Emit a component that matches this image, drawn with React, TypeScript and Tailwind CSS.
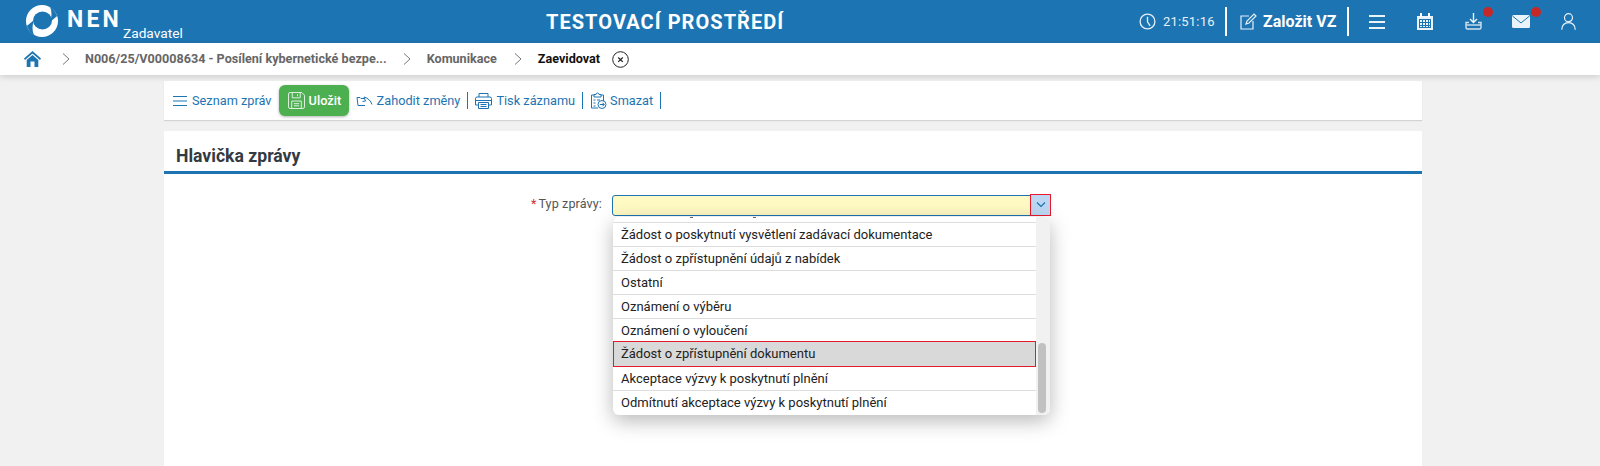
import React from "react";

const Logo = () => (
  <svg width="32" height="32" viewBox="0 0 32 32" fill="none">
    <circle cx="16" cy="16" r="16" fill="#fff" />
    <ellipse cx="16.500" cy="15.500" rx="9.500" ry="9" fill="#1d74b2" />
    <path d="M0.800 21 C2.500 25.500 5 28.500 8 30 C6 26 6 20.500 8 15 Z" fill="#1d74b2" />
    <path d="M31.200 11 C29.500 6.500 27 3.500 24 2 C26 6 26 11.500 24 17 Z" fill="#1d74b2" />
  </svg>
);

const Clock = () => (
  <svg width="17" height="17" viewBox="0 0 17 17" fill="none" stroke="#e6f0f8" strokeWidth="1.300">
    <circle cx="8.500" cy="8.500" r="7.400" /><path d="M8.500 3.800v5l2.600 4" />
  </svg>
);
const Edit = () => (
  <svg width="17" height="17" viewBox="0 0 17 17" fill="none" stroke="#e6f0f8" strokeWidth="1.200">
    <path d="M9 3H1v13h12V8" /><path d="M6 11l1-3 7-7 2 2-7 7z" />
  </svg>
);
const Calendar = () => (
  <svg width="16" height="17" viewBox="0 0 16 17">
    <path d="M0 3h16v14H0z" fill="#eaf3fa" />
    <path d="M3 0h2v4H3zM11 0h2v4h-2z" fill="#fff" />
    <path d="M2 6h12v9H2z" fill="#1d74b2" />
    <path d="M3 7h2v2H3zM6 7h2v2H6zM9 7h2v2H9zM12 7h1v2h-1zM3 10h2v2H3zM6 10h2v2H6zM9 10h2v2H9zM12 10h1v2h-1zM3 13h2v1H3zM6 13h2v1H6zM9 13h2v1H9zM12 13h1v1h-1z" fill="#eaf3fa" />
  </svg>
);
const Download = () => (
  <svg width="17" height="17" viewBox="0 0 17 17" fill="none" stroke="#eaf3fa" strokeWidth="1.400">
    <path d="M8.500 0v9M5 6l3.500 3.500L12 6" />
    <path d="M4 9.500H1v5a1.500 1.500 0 0 0 1.500 1.500h12a1.500 1.500 0 0 0 1.500-1.500v-5h-3" stroke="#cfe2f1" />
    <path d="M1 12h15" stroke="#cfe2f1" />
  </svg>
);
const Mail = () => (
  <svg width="18" height="13" viewBox="0 0 18 13">
    <rect width="18" height="13" rx="1.500" fill="#eaf3fa" />
    <path d="M0.500 1 L9 8 L17.500 1" fill="none" stroke="#1d74b2" strokeWidth="1" />
  </svg>
);
const User = () => (
  <svg width="15" height="17" viewBox="0 0 15 17" fill="none" stroke="#e6f0f8" strokeWidth="1.200">
    <circle cx="7.500" cy="4.700" r="4" /><path d="M.7 16.800C1 12.500 3.500 9.700 7.500 9.700s6.500 2.800 6.800 7.100" />
  </svg>
);
const Home = () => (
  <svg width="17" height="16" viewBox="0 0 17 16" fill="#1d74b2">
    <path d="M8.500 0 L0 7.500 L1 9 L8.500 2.600 L16 9 L17 7.500 Z" />
    <path d="M2.700 9 L8.500 4 L14.300 9 V16 H10.500 V10.500 H6.500 V16 H2.700 Z" />
  </svg>
);
const Chevron = () => (
  <svg width="8" height="12" viewBox="0 0 8 12" fill="none" stroke="#777" strokeWidth="1"><path d="M1 .5 7 6 1 11.500" /></svg>
);
const CloseC = () => (
  <svg width="17" height="17" viewBox="0 0 17 17" fill="none" stroke="#222" strokeWidth="1">
    <circle cx="8.500" cy="8.500" r="7.800" /><path d="M6.200 6.500l4.600 4.400M10.800 6.500l-4.600 4.400" strokeWidth="1.200" />
  </svg>
);
const Lines = () => (
  <svg width="14" height="10" viewBox="0 0 14 10" stroke="#1d74b2" strokeWidth="1"><path d="M0 .5h14M0 5h14M0 9.500h14" /></svg>
);
const Save = () => (
  <svg width="17" height="17" viewBox="0 0 16 16" fill="none" stroke="#e8f5e9" strokeWidth="0.900">
    <path d="M2 .5h11l2.500 2.500v11a1.500 1.500 0 0 1-1.500 1.500H2A1.500 1.500 0 0 1 .5 14V2A1.500 1.500 0 0 1 2 .5Z" />
    <path d="M4 .5v5h7.500v-5M9 2v2M3.500 15.500V8.500h9v7M5.500 11h5M5.500 13h5" />
  </svg>
);
const Discard = () => (
  <svg width="17" height="11" viewBox="0 0 17 11" fill="none" stroke="#1d74b2" strokeWidth="1">
    <path d="M1 2.500l1 8h7M1 2.500h3l1 1h4M16 9.500C15 6 12 3 8 2l1.500 4-3 .5" />
  </svg>
);
const Printer = () => (
  <svg width="17" height="16" viewBox="0 0 17 16" fill="none" stroke="#1d74b2" strokeWidth="1">
    <path d="M4 4V.5h9V4M3.500 12H.5V5.500A1.500 1.500 0 0 1 2 4h13a1.500 1.500 0 0 1 1.500 1.500V12h-3" />
    <path d="M1 7.500h15" />
    <path d="M3.500 9.500h10v6h-10zM5.500 11.500h6M5.500 13.500h6" />
  </svg>
);
const Clip = () => (
  <svg width="17" height="17" viewBox="0 0 17 17" fill="none" stroke="#1d74b2" strokeWidth="1">
    <path d="M8 16H1.500V3H4M11 3h2.500v6" />
    <path d="M4 5V2.500h2a1.500 1.500 0 0 1 3 0h2V5zM3.500 8h2M3.500 11h2M3.500 14h2M7 8h3" />
    <circle cx="12" cy="12.500" r="4" />
    <path d="M9.800 12.500h4.400M12.500 10.800l1.700 1.700-1.700 1.700" />
  </svg>
);

const options = [
  "Žádost o poskytnutí vysvětlení zadávací dokumentace",
  "Žádost o zpřístupnění údajů z nabídek",
  "Ostatní",
  "Oznámení o výběru",
  "Oznámení o vyloučení",
  "Žádost o zpřístupnění dokumentu",
  "Akceptace výzvy k poskytnutí plnění",
  "Odmítnutí akceptace výzvy k poskytnutí plnění",
];

export default function App() {
  return (
    <div className="h-[466px] overflow-hidden bg-[#f1f1f1] font-['Roboto',sans-serif]">
      <header className="flex h-[43px] bg-[#1d74b2] text-white">
        <div className="flex h-[43px] w-[400px] items-start pl-[26px] pt-[5px]">
          <Logo />
          <span className="ml-[9px] mt-[3px] text-[23px] leading-[24px] font-bold tracking-[3.2px]">NEN</span>
          <span className="ml-[1px] mt-[20px] text-[13.7px] leading-[16px]">Zadavatel</span>
        </div>
        <div className="flex w-[528px] items-center pl-[146px] text-[20px] font-bold tracking-[1.05px] whitespace-nowrap">TESTOVACÍ PROSTŘEDÍ</div>
        <div className="flex flex-1 items-center">
          <span className="ml-[211px]"><Clock /></span>
          <span className="ml-[7px] w-[62px] text-[13px] tracking-[0.2px] text-[#e6f0f8]">21:51:16</span>
          <span className="h-[29px] w-[2px] bg-white" />
          <span className="ml-[13px]"><Edit /></span>
          <span className="ml-[6px] w-[84px] text-[16px] font-bold whitespace-nowrap">Založit VZ</span>
          <span className="h-[29px] w-[2px] bg-white" />
          <svg className="ml-[20px]" width="16" height="14" viewBox="0 0 16 14" stroke="#eaf3fa" strokeWidth="2"><path d="M0 1h16M0 7h16M0 13h16" /></svg>
          <span className="ml-[32px]"><Calendar /></span>
          <span className="relative ml-[32px]"><Download /><span className="absolute -right-[11px] -top-[6px] h-[10px] w-[10px] rounded-full bg-[#c62828]" /></span>
          <span className="relative ml-[30px]"><Mail /><span className="absolute -right-[11px] -top-[8px] h-[10px] w-[10px] rounded-full bg-[#c62828]" /></span>
          <span className="ml-[31px]"><User /></span>
        </div>
      </header>

      <nav className="relative z-10 flex h-[32px] items-center bg-white pl-[24px] text-[12.6px] font-bold text-[#666] shadow-[0_2px_6px_rgba(0,0,0,0.15)]">
        <Home />
        <span className="ml-[21px]"><Chevron /></span>
        <span className="ml-[15px] whitespace-nowrap">N006/25/V00008634 - Posílení kybernetické bezpe...</span>
        <span className="ml-[16px]"><Chevron /></span>
        <span className="ml-[16px]">Komunikace</span>
        <span className="ml-[17px]"><Chevron /></span>
        <span className="ml-[16px] text-[#111]">Zaevidovat</span>
        <span className="ml-[12px]"><CloseC /></span>
      </nav>

      <main className="relative mx-[164px] mt-[6px] w-[1258px]">
        <div className="flex h-[39px] items-center bg-white pl-[9px] text-[12.75px] text-[#1d74b2] shadow-[0_1px_1px_rgba(0,0,0,0.12)]">
          <Lines />
          <span className="ml-[5px] whitespace-nowrap">Seznam zpráv</span>
          <span className="ml-[7px] h-[16px] w-px bg-[#1d74b2]" />
          <button className="-ml-px flex h-[31px] w-[70px] items-center rounded-[6px] bg-[#4caf50] pl-[9px] font-medium text-white shadow-[0_1px_3px_rgba(0,0,0,0.3)]">
            <Save /><span className="ml-[4px]">Uložit</span>
          </button>
          <span className="ml-[7px]"><Discard /></span>
          <span className="ml-[4px] whitespace-nowrap">Zahodit změny</span>
          <span className="ml-[7px] h-[17px] w-px bg-[#1d74b2]" />
          <span className="ml-[7px]"><Printer /></span>
          <span className="ml-[4px] whitespace-nowrap">Tisk záznamu</span>
          <span className="ml-[7px] h-[17px] w-px bg-[#1d74b2]" />
          <span className="ml-[7px]"><Clip /></span>
          <span className="ml-[3px] whitespace-nowrap">Smazat</span>
          <span className="ml-[7px] h-[17px] w-px bg-[#1d74b2]" />
        </div>

        <section className="relative mt-[11px] h-[340px] bg-white">
          <h2 className="flex h-[43px] items-center border-b-[3px] border-[#1d74b2] pl-[12px] pt-[11px] text-[17.6px] font-bold text-[#333a42]">Hlavička zprávy</h2>
          <div className="mt-[21px] flex items-start">
            <label className="flex w-[438px] justify-end pt-[1px] text-[12.6px] leading-[16px] tracking-[0.1px] text-[#555]">
              <span className="mr-[2px] text-[#d32f2f]">*</span>Typ zprávy:
            </label>
            <div className="relative ml-[10px] h-[21px] w-[438px] rounded-[3px] border border-[#1d74b2] bg-[#fff9c4]">
              <button className="absolute -right-[2px] -top-[2px] flex h-[22px] w-[21px] items-center justify-center border border-[#e8192c] bg-[#bdd7f3]">
                <svg width="10" height="6" viewBox="0 0 10 6" fill="none" stroke="#1d74b2" strokeWidth="1.200"><path d="M1 .5 5 4.500 9 .5" /></svg>
              </button>
            </div>
          </div>
        </section>

        <div className="absolute left-[449px] top-[136px] z-20 flex h-[198px] w-[437px] overflow-hidden rounded-[6px] bg-white shadow-[0_6px_20px_rgba(0,0,0,0.28)]">
          <ul className="relative w-[423px] pt-[5px] text-[13px] text-[#222]">
            <li className="absolute left-[77px] top-0 h-px w-[3px] bg-[#666]" aria-hidden="true" />
            <li className="absolute left-[140px] top-0 h-px w-[3px] bg-[#666]" aria-hidden="true" />
            {options.map((o) => (
              <li
                key={o}
                className={
                  o === "Žádost o zpřístupnění dokumentu"
                    ? "relative -my-px flex h-[26px] items-center border border-[#e8192c] bg-[#d9d9d9] pl-[7px]"
                    : "flex h-[24px] items-center border-t-[1px] border-[#dddddd] pl-[8px]"
                }
              >
                {o}
              </li>
            ))}
          </ul>
          <div className="flex w-[14px] items-end bg-[#f1f1f1] px-[2px] pb-[2px]">
            <div className="h-[70px] w-[8px] rounded-[4px] bg-[#c1c1c1]" />
          </div>
        </div>
      </main>
    </div>
  );
}
